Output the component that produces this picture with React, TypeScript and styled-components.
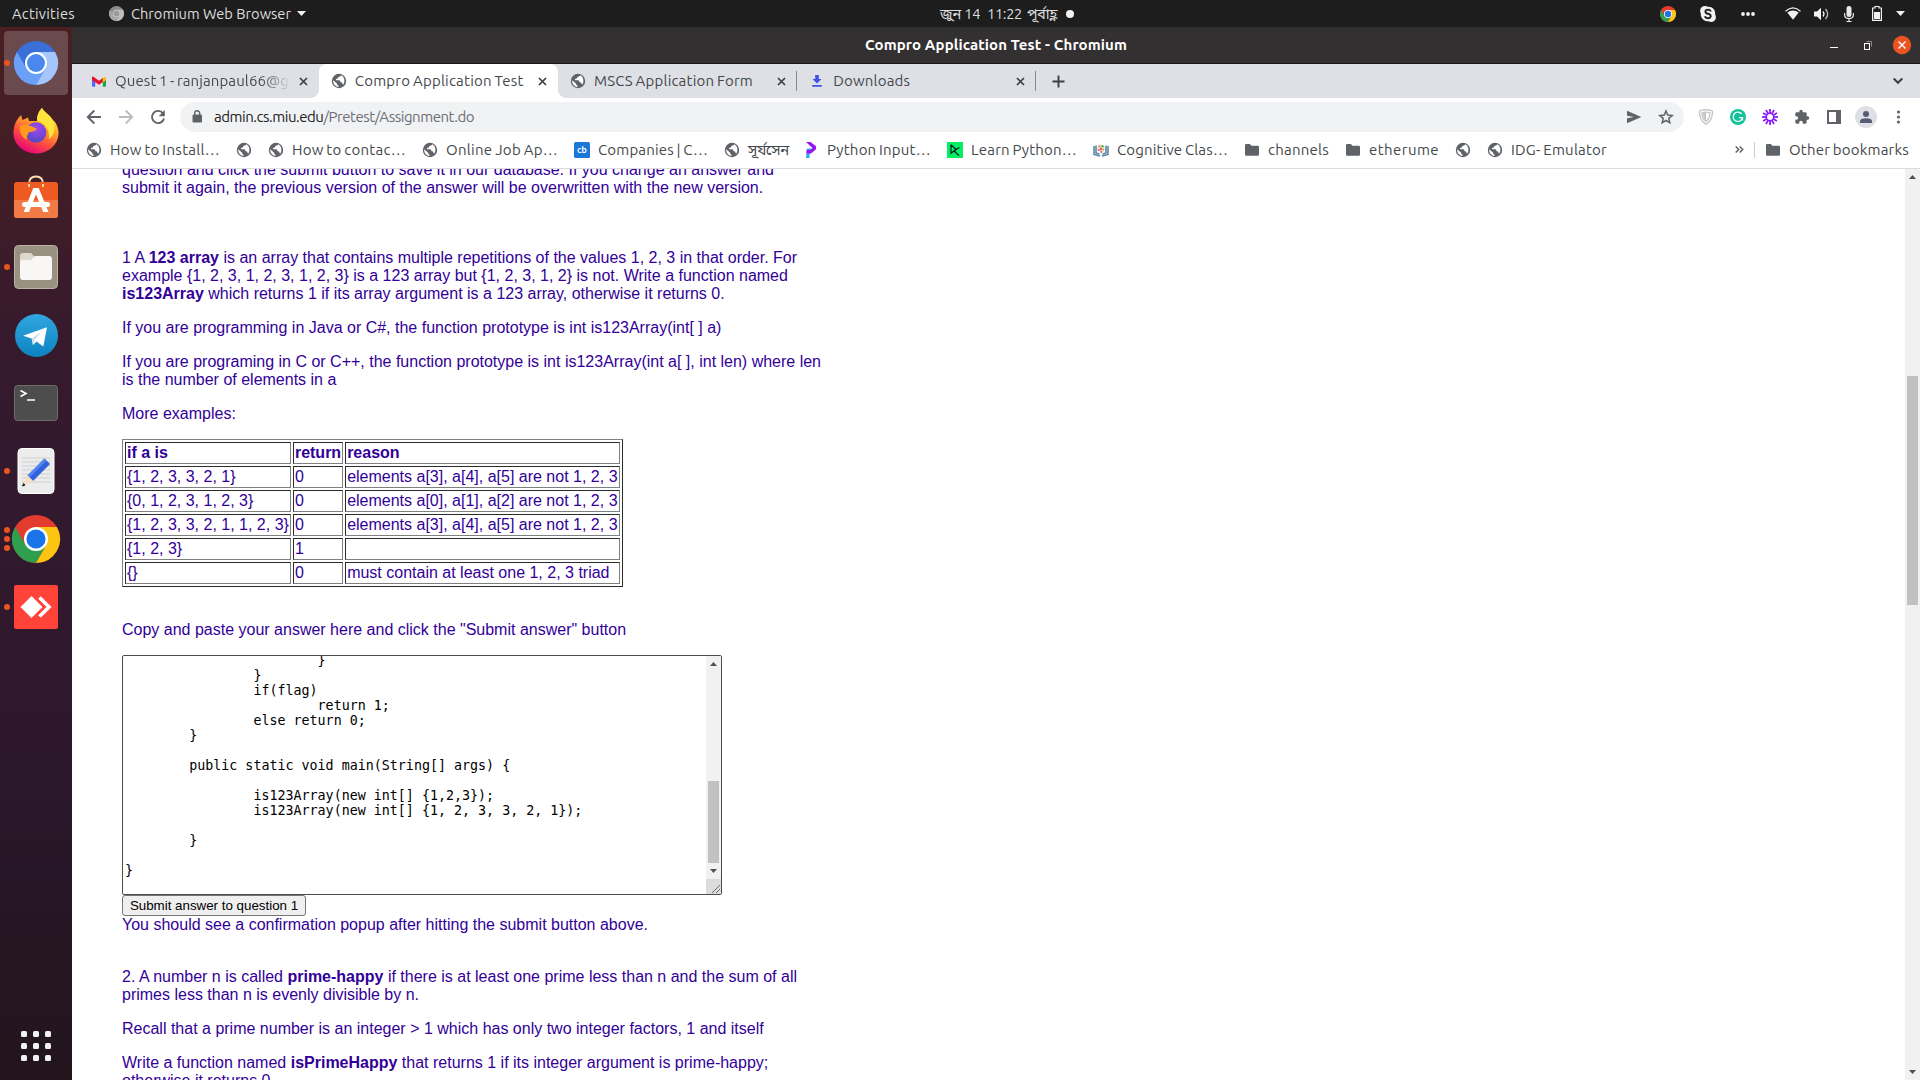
import React, { useLayoutEffect, useRef } from "react";
import styled, { createGlobalStyle } from "styled-components";

const Global = createGlobalStyle`
  html, body { margin: 0; padding: 0; overflow: hidden; background: #fff; }
  * { box-sizing: border-box; }
`;

const UI_FONT = `Ubuntu, "Open Sans", "Noto Sans", "Noto Sans Bengali", sans-serif`;
const ICON = "#5f6368";

/* ---------- shared pieces ---------- */

const Slot = styled.span<{ $w: number; $fade?: boolean }>`
  display: block;
  flex: none;
  width: ${(p) => p.$w}px;
  height: 18px;
  line-height: 18px;
  white-space: pre;
  ${(p) =>
    p.$fade &&
    "mask-image: linear-gradient(to right, #000 84%, transparent 101%); overflow: hidden;"}
`;

/* A label whose tracking is adjusted so that it fills its slot. */
function Label({ w, children, fade }: { w: number; children: React.ReactNode; fade?: boolean }) {
  const ref = useRef<HTMLSpanElement>(null);
  useLayoutEffect(() => {
    const el = ref.current;
    if (!el) return;
    el.style.letterSpacing = "0px";
    const n = (el.textContent || "").length;
    const natural = el.getBoundingClientRect().width;
    if (n > 0) el.style.letterSpacing = `${(w - natural) / n}px`;
  }, [w]);
  return (
    <Slot $w={w} $fade={fade}>
      <span ref={ref}>{children}</span>
    </Slot>
  );
}

const Svg = styled.svg`
  display: block;
  flex: none;
  overflow: visible;
`;

const Spacer = styled.div<{ $w?: number }>`
  flex: ${(p) => (p.$w === undefined ? "1 1 0" : "none")};
  width: ${(p) => p.$w ?? 0}px;
`;

/* ---------- desktop shell ---------- */

const Desktop = styled.div`
  display: flex;
  flex-direction: column;
  width: 1920px;
  height: 1080px;
  overflow: hidden;
  background: #fff;
  font-family: ${UI_FONT};
`;

const TopBar = styled.header`
  display: grid;
  grid-template-columns: 928px 1fr auto;
  align-items: center;
  height: 27px;
  flex: none;
  background: #1d1d1d;
  color: #dedede;
  font-size: 14.667px;
`;

const BarGroup = styled.div<{ $pad?: string }>`
  display: flex;
  align-items: center;
  padding: ${(p) => p.$pad ?? "0"};
`;

const Body = styled.div`
  display: flex;
  flex: 1;
  min-height: 0;
`;

const Dock = styled.nav`
  display: flex;
  flex-direction: column;
  align-items: center;
  gap: 4px;
  width: 72px;
  flex: none;
  padding: 4px 0 19px;
  background: linear-gradient(
    #491f21 0px,
    #401d27 170px,
    #371a2c 290px,
    #32192e 470px,
    #2d182b 720px,
    #271627 850px,
    #22151c 1053px
  );
`;

const DockItem = styled.div<{ $active?: boolean }>`
  display: grid;
  grid-template-columns: 6px 52px 6px;
  align-items: center;
  justify-items: center;
  width: 64px;
  height: 64px;
  flex: none;
  border-radius: 4px;
  background: ${(p) => (p.$active ? "#6a4a4c" : "transparent")};
`;

const Running = styled.div`
  display: flex;
  flex-direction: column;
  gap: 3px;
`;

const RunDot = styled.i`
  display: block;
  width: 6px;
  height: 6px;
  border-radius: 3px;
  background: #e95420;
`;

const AppGrid = styled.div`
  display: grid;
  grid-template-columns: repeat(3, 6px);
  grid-auto-rows: 6px;
  gap: 6px;
  margin-top: auto;
`;

const GridDot = styled.i`
  border-radius: 1.5px;
  background: #f1f1f1;
`;

/* ---------- browser chrome ---------- */

const Win = styled.main`
  display: flex;
  flex-direction: column;
  flex: 1;
  min-width: 0;
`;

const TitleBar = styled.div`
  display: grid;
  grid-template-columns: 1fr auto 1fr;
  align-items: center;
  height: 37px;
  flex: none;
  padding-right: 9px;
  padding-left: 9px;
  background: #333031;
  border-bottom: 1px solid #1a1919;
  color: #fff;
  font-size: 15px;
  font-weight: 700;
`;

const WinButtons = styled.div`
  display: flex;
  justify-content: flex-end;
  align-items: center;
  gap: 16px;
`;

const TabStrip = styled.div`
  display: flex;
  height: 34px;
  flex: none;
  padding-left: 7px;
  background: #dee0e5;
  color: #45484c;
  font-size: 15px;
  word-spacing: -1px;
`;

const Tab = styled.div<{ $active?: boolean; $line?: boolean; $w: number }>`
  position: relative;
  display: flex;
  align-items: center;
  width: ${(p) => p.$w}px;
  padding: 0 11px 0 12px;
  border-radius: 8px 8px 0 0;
  background: ${(p) => (p.$active ? "#fff" : "transparent")};
  &::before,
  &::after {
    content: "";
    position: absolute;
    bottom: 0;
    width: 8px;
    height: 8px;
    display: ${(p) => (p.$active ? "block" : "none")};
  }
  &::before {
    left: -8px;
    background: radial-gradient(circle at 0 0, transparent 7.5px, #fff 8px);
  }
  &::after {
    right: -8px;
    background: radial-gradient(circle at 100% 0, transparent 7.5px, #fff 8px);
  }
  ${(p) =>
    p.$line &&
    `&::after { display: block; right: 0; bottom: 7px; width: 1px; height: 20px; background: #85888d; }`}
`;

const TabIcon = styled.span`
  display: flex;
  justify-content: center;
  width: 16px;
  margin-right: 8px;
`;

const Toolbar = styled.div`
  display: flex;
  align-items: center;
  height: 38px;
  flex: none;
  padding: 0 12px 0 14px;
  font-size: 15px;
`;

const NavButtons = styled.div`
  display: flex;
  gap: 16px;
  margin-right: 14px;
`;

const Omnibox = styled.div`
  display: flex;
  align-items: center;
  width: 1504px;
  height: 30px;
  padding: 0 10px 0 9px;
  border-radius: 15px;
  background: #f1f2f4;
  color: #202124;
`;

const Path = styled.span`
  color: #6b6f74;
`;

const Extensions = styled.div`
  display: flex;
  align-items: center;
  gap: 16px;
  padding-left: 14px;
`;

const Avatar = styled.span`
  display: flex;
  align-items: center;
  justify-content: center;
  width: 22px;
  height: 22px;
  margin: 0 -3px;
  border-radius: 50%;
  background: #dee0e5;
`;

const Bookmarks = styled.div`
  display: flex;
  align-items: center;
  gap: 16px;
  height: 33px;
  flex: none;
  padding: 0 11px 5px 14px;
  border-bottom: 1px solid #dadce0;
  color: #45484c;
  font-size: 15px;
  word-spacing: -1px;
`;

const Bookmark = styled.div`
  display: flex;
  align-items: center;
  gap: 8px;
`;

const Overflow = styled.div`
  display: flex;
  align-items: center;
  gap: 10px;
  margin-right: -6px;
`;

const Divider = styled.i`
  width: 1px;
  height: 16px;
  background: #c9ccd1;
`;

/* ---------- page ---------- */

const Viewport = styled.div`
  display: flex;
  flex: 1;
  min-height: 0;
  overflow: hidden;
`;

const Page = styled.article`
  flex: 1;
  min-width: 0;
  height: 911px;
  overflow: hidden;
  padding-left: 50px;
  color: #330099;
  font-family: "Liberation Sans", Arial, sans-serif;
  font-size: 16px;
  line-height: 18px;
  white-space: nowrap;
`;

const Para = styled.p<{ $top?: number }>`
  margin: ${(p) => p.$top ?? 16}px 0 0;
`;

const Examples = styled.table`
  margin-top: 16px;
  border: 1px solid;
  border-color: #808080 #2b2b2b #2b2b2b #808080;
  border-collapse: separate;
  border-spacing: 2px;
`;

const Cell = styled.td<{ $head?: boolean }>`
  height: 22px;
  padding: 1px;
  border: 1px solid;
  border-color: #2b2b2b #808080 #808080 #2b2b2b;
  font-weight: ${(p) => (p.$head ? 700 : 400)};
`;

const Editor = styled.div`
  display: flex;
  width: 600px;
  height: 240px;
  margin-top: 16px;
  border: 1px solid #4c4c4c;
  border-radius: 2px;
  overflow: hidden;
  background: #fff;
`;

const Code = styled.pre`
  flex: 1;
  margin: -3px 0 0;
  padding: 0 2px;
  color: #000;
  font: 13.333px/15px "DejaVu Sans Mono", monospace;
  tab-size: 8;
`;

const ScrollColumn = styled.div`
  display: flex;
  flex-direction: column;
  width: 15px;
  flex: none;
`;

const Track = styled.div`
  display: flex;
  flex-direction: column;
  align-items: center;
  width: 15px;
  flex: 1;
  min-height: 0;
  background: #f1f1f1;
`;

const Thumb = styled.div<{ $top: number; $h: number }>`
  width: 11px;
  height: ${(p) => p.$h}px;
  margin-top: ${(p) => p.$top}px;
  flex: none;
  background: #c1c1c1;
`;

const Arrow = styled.i<{ $down?: boolean }>`
  width: 7px;
  height: 4px;
  margin: ${(p) => (p.$down ? "auto 0 6px" : "6px 0 0")};
  flex: none;
  background: #505050;
  clip-path: ${(p) =>
    p.$down ? "polygon(0 0, 100% 0, 50% 100%)" : "polygon(50% 0, 100% 100%, 0 100%)"};
`;

const Grip = styled.div`
  display: flex;
  align-items: flex-end;
  justify-content: flex-end;
  height: 15px;
  padding: 1px;
  background: #dcdcdc;
`;

const Submit = styled.button`
  display: block;
  width: 184px;
  height: 21px;
  padding: 0;
  border: 1px solid #767676;
  border-radius: 3px;
  background: #efefef;
  color: #000;
  font: 13.333px/17px "Liberation Sans", Arial, sans-serif;
`;

/* ---------- icons ---------- */

const Globe = () => (
  <Svg width="16" height="16" viewBox="0 0 16 16">
    <circle cx="8" cy="8" r="7.2" fill={ICON} />
    <path
      d="M9.600 2.200 8.900 3.400 6.800 3.500 6.600 5 4.600 5.300 4.900 6.900 7.900 7 9.200 8.200 8.600 9.900 6.600 10.300 6.900 12.800 6.200 13.600 3.400 12.300 2 9.400 2.200 7.400 4 8.200 5.400 9.200 6 8.700 3.900 6.800 2.600 6.400 4.200 3.400 7 2z"
      fill="none"
    />
    <path
      d="M10.300 2.300C9.800 3.700 8.600 3.700 7.400 3.900 6.900 4.500 7.300 5.100 6.700 5.600L5 5.900 5.100 7.200H8.200C9.200 7.400 9.300 8.500 9.600 9.200L11.200 9.400C11.300 10.300 11.500 11 12.300 11.600 14.400 8.800 13.600 4.200 10.300 2.300zM2.200 7.300C1.800 10.500 4.200 13.700 7.500 13.900V12.500C6.400 12.400 6.100 11.600 6.200 10.700z"
      fill="#fff"
    />
  </Svg>
);

const Gmail = () => (
  <Svg width="14" height="11" viewBox="0 0 14 11">
    <path d="M0 2v7.8q0 .9.9.9h2.3V4.5z" fill="#4b6bfb" />
    <path d="M14 2v7.8q0 .9-.9.9h-2.3V4.5z" fill="#18a84b" />
    <path d="M14 1.8v2.3l-3.2 2.3V2.2l1-.8Q14-.2 14 1.8z" fill="#fbbc04" />
    <path d="M0 4V1.8Q0-.2 2.2 1.2L7 4.8l3.8-2.9v4L7 8.8z" fill="#e8112d" />
  </Svg>
);

const Close = () => (
  <Svg width="9" height="9" viewBox="0 0 9 9" stroke="#3c4043" strokeWidth="1.7">
    <path d="M1 1l7 7M8 1L1 8" />
  </Svg>
);

const Folder = () => (
  <Svg width="16" height="16" viewBox="0 0 16 16">
    <path d="M1 3.3Q1 2 2.3 2h3.5l1.6 1.7h6.3Q15 3.7 15 5v7.4q0 1.3-1.3 1.3H2.3Q1 13.700 1 12.400z" fill={ICON} />
  </Svg>
);

const ChromeLogo = ({ size, mono }: { size: number; mono?: "blue" | "gray" }) => {
  const [a, b, c, d] =
    mono === "blue"
      ? ["#3a6fd8", "#6ba0f8", "#a6c5fb", "#4a88f0"]
      : mono === "gray"
        ? ["#8b8b8b", "#a6a6a6", "#bdbdbd", "#9a9a9a"]
        : ["#e33b2e", "#2f9e4f", "#fcc511", "#1a73e8"];
  return (
    <Svg width={size} height={size} viewBox="0 0 48 48">
      <circle cx="24" cy="24" r="24" fill={a} />
      <path d="M3.200 12A24 24 0 0 0 24 48L34.4 30 24 24 13.6 30z" fill={b} />
      <path d="M44.800 12A24 24 0 0 1 24 48L34.400 30 24 24V12z" fill={c} />
      <circle cx="24" cy="24" r="12" fill={mono === "gray" ? "#d0d0d0" : "#fff"} />
      <circle cx="24" cy="24" r={mono ? 9.8 : 9.6} fill={d} />
    </Svg>
  );
};

const Firefox = () => (
  <Svg width="46" height="46" viewBox="0 0 46 46">
    <defs>
      <linearGradient id="fxBody" x1=".8" y1=".05" x2=".3" y2="1">
        <stop offset="0" stopColor="#fff14a" />
        <stop offset=".35" stopColor="#ffa62a" />
        <stop offset=".65" stopColor="#ff4f3e" />
        <stop offset="1" stopColor="#e4007f" />
      </linearGradient>
      <radialGradient id="fxOrb" cx=".55" cy=".3" r=".7">
        <stop offset="0" stopColor="#a346f0" />
        <stop offset="1" stopColor="#5349c4" />
      </radialGradient>
    </defs>
    <path
      d="M29 0C31 4 36 6 39 11L42 14C44 17 46 22 45.500 26A22.500 20 0 0 1 .500 25C.500 18 3 12 8 7L9.500 12 15 9.500 16 13 24 13C24 7 26 3 29 0z"
      fill="url(#fxBody)"
    />
    <path d="M29 0C31 4 36 6 39 11 43 18 42 27 36 31 37 20 31 15 24 12.500 24 7 26 3 29 0z" fill="#ffe43d" />
    <circle cx="23" cy="24.500" r="10.300" fill="url(#fxOrb)" />
    <path d="M7 18C12 16 18 17 24 21 21 24 18 23.500 15.500 24.500 15 27 13 29 14 32 8 29 6 23 7 18z" fill="#ff9a1f" />
  </Svg>
);

const Software = () => (
  <Svg width="46" height="48" viewBox="0 0 46 48">
    <path d="M16 9Q16 1.500 23 1.500T30 9" fill="none" stroke="#fbdcae" strokeWidth="1.800" />
    <rect x="1" y="7" width="44" height="36" rx="3" fill="#ee5b22" />
    <path d="M1 25H45V40q0 3-3 3H4q-3 0-3-3z" fill="#f27a45" />
    <path d="M20.300 13h5.400L35.500 37h-5.300L23 19.500 16 37h-5.300z" fill="#fff" />
    <rect x="9" y="27" width="28" height="5" rx="2.500" fill="#fff" />
    <path d="M16 9v3M30 9v3" stroke="#fbdcae" strokeWidth="1.800" />
  </Svg>
);

const Files = () => (
  <Svg width="46" height="46" viewBox="0 0 46 46">
    <rect x="1.500" y="1.500" width="43" height="43" rx="4" fill="#999181" stroke="#b9b3a6" />
    <path d="M7 12q0-3 3-3h8l4 4h14v8H7z" fill="#dcd8cc" />
    <path d="M7 18q0-2 2-2h9l4-4h14q3 0 3 3v18q0 3-3 3H10q-3 0-3-3z" fill="#f8f7f5" />
  </Svg>
);

const Telegram = () => (
  <Svg width="43" height="43" viewBox="0 0 43 43">
    <defs>
      <linearGradient id="tg" x1="0" y1="0" x2="0" y2="1">
        <stop offset="0" stopColor="#31a7df" />
        <stop offset="1" stopColor="#0d82c2" />
      </linearGradient>
    </defs>
    <circle cx="21.500" cy="21.500" r="21.500" fill="url(#tg)" />
    <path d="M8 21.800 32 13.200 28.300 32.500 21.500 27.500 18 31 16.700 24.600z" fill="#fff" />
    <path d="M16.700 24.600 27 17.500 19.500 26 18 31z" fill="#c9dfec" />
  </Svg>
);

const Terminal = () => (
  <Svg width="44" height="36" viewBox="0 0 44 36">
    <rect x=".500" y=".500" width="43" height="35" rx="3" fill="#4d4d4d" stroke="#6d6d6d" />
    <path d="M6.500 5.500 12 8.500 6.500 11.500M13 15h8" stroke="#fff" strokeWidth="1.600" fill="none" />
  </Svg>
);

const TextEditor = () => (
  <Svg width="38" height="46" viewBox="0 0 38 46">
    <rect x="1" y=".500" width="36" height="45" rx="4" fill="#ececec" stroke="#fff" />
    <path
      d="M5 10h28M5 14h28M5 18h28M5 22h28M5 26h28M5 30h28M5 34h28"
      stroke="#cfcfcf"
      strokeWidth="1"
    />
    <path d="M27.500 10.500 33 16 16 33 10.500 27.500z" fill="#2f62dc" />
    <path d="M27.500 10.500 29.500 12.500 12.500 29.500 10.500 27.500z" fill="#5485f0" />
    <path d="M10.500 27.500 16 33 5.500 38z" fill="#f8dcc4" />
    <path d="M6.600 35.500 5.500 38 8 37z" fill="#222" stroke="#222" />
  </Svg>
);

const AnyDesk = () => (
  <Svg width="44" height="44" viewBox="0 0 44 44">
    <rect width="44" height="44" rx="2" fill="#ff4338" />
    <path d="M17.500 11 28.500 22 17.500 33 6.500 22z" fill="#fff" />
    <path d="M25.500 12.500 35 22 25.500 31.500" fill="none" stroke="#fff" strokeWidth="3.600" />
  </Svg>
);

const Caret = ({ w = 9 }: { w?: number }) => (
  <Svg width={w} height="5" viewBox="0 0 9 5">
    <path d="M0 0h9L4.500 5z" fill="#f2f2f2" />
  </Svg>
);

const StatusIcons = () => (
  <>
    <ChromeLogo size={16} />
    <Spacer $w={24} />
    <Svg width="16" height="16" viewBox="0 0 16 16">
      <path d="M4.500 0Q7 0 8 .700C13 .700 15.500 4 15.200 8.500 17 12 15 16 11.500 16Q9.500 16 8.500 15.300C3.500 15.300.500 12 .800 7.500-.800 4 1 0 4.500 0z" fill="#f2f2f2" />
      <path
        d="M10.800 5.500Q10.300 3.600 8 3.600 5.400 3.700 5.400 5.600 5.500 7.300 8 7.800 10.700 8.300 10.700 10.200 10.500 12.300 8 12.300 5.500 12.300 5 10.300"
        fill="none"
        stroke="#222"
        strokeWidth="1.900"
      />
    </Svg>
    <Spacer $w={24} />
    <Svg width="16" height="4" viewBox="0 0 16 4" fill="#f2f2f2">
      <circle cx="3" cy="2" r="1.900" />
      <circle cx="8" cy="2" r="1.900" />
      <circle cx="13" cy="2" r="1.900" />
    </Svg>
    <Spacer $w={29} />
    <Svg width="16" height="14" viewBox="0 0 16 14">
      <path d="M.500 4.200Q8-2.500 15.500 4.200" fill="none" stroke="#f2f2f2" strokeWidth="1.200" />
      <path d="M2.300 5.600Q8 1.300 13.700 5.600L8 12.800z" fill="#f2f2f2" />
    </Svg>
    <Spacer $w={13} />
    <Svg width="15" height="14" viewBox="0 0 15 14">
      <path d="M0 4.500h3L7 .800v12.400L3 9.500H0z" fill="#f2f2f2" />
      <path d="M9 4.500Q11 7 9 9.500" fill="none" stroke="#f2f2f2" strokeWidth="1.300" />
      <path d="M11.500 2Q15.800 7 11.500 12" fill="none" stroke="#bbb" strokeWidth="1.300" />
    </Svg>
    <Spacer $w={15} />
    <Svg width="10" height="16" viewBox="0 0 10 16">
      <rect x="2.500" y="0" width="5" height="11" rx="2.500" fill="#e8e8e8" />
      <path d="M.600 7v1.500Q.600 12.600 5 12.600T9.400 8.500V7M5 12.600V15.500M2.500 15.500h5" fill="none" stroke="#f2f2f2" strokeWidth="1.100" />
    </Svg>
    <Spacer $w={18} />
    <Svg width="10" height="15" viewBox="0 0 10 15">
      <path d="M3 .500h4V2h2.400v12.400H.600V2H3z" fill="none" stroke="#f2f2f2" strokeWidth="1.200" />
      <rect x="2" y="6" width="6" height="7" fill="#f2f2f2" />
    </Svg>
    <Spacer $w={14} />
    <Caret />
  </>
);

/* ---------- content ---------- */

const dock: { icon: React.ReactNode; run: number; active?: boolean }[] = [
  { icon: <ChromeLogo size={44} mono="blue" />, run: 1, active: true },
  { icon: <Firefox />, run: 0 },
  { icon: <Software />, run: 0 },
  { icon: <Files />, run: 1 },
  { icon: <Telegram />, run: 0 },
  { icon: <Terminal />, run: 0 },
  { icon: <TextEditor />, run: 1 },
  { icon: <ChromeLogo size={48} />, run: 3 },
  { icon: <AnyDesk />, run: 1 },
];

const DownloadIcon = () => (
  <Svg width="10" height="12" viewBox="0 0 10 12" fill="#3f51e8">
    <path d="M3.200 0h3.600v4H9.500L5 8.500.500 4h2.700zM.200 10h9.600v1.800H.200z" />
  </Svg>
);

const CareerIcon = () => (
  <Svg width="16" height="16" viewBox="0 0 16 16">
    <rect width="16" height="16" rx="1.500" fill="#1b78d8" />
    <text x="8" y="11" textAnchor="middle" fontFamily="Lato, sans-serif" fontWeight="700" fontSize="9" fill="#fff">
      cb
    </text>
  </Svg>
);

const PIcon = () => (
  <Svg width="16" height="16" viewBox="0 0 16 16">
    <path d="M4 6.500h4.500V10l-2 1.500V16H3z" fill="#2ba8f5" />
    <path d="M3 0h4.500L13 4.300v3L8 11.500H3.500L3.500 8h4L9.500 6z" fill="#9a12f5" />
  </Svg>
);

const DCIcon = () => (
  <Svg width="16" height="16" viewBox="0 0 16 16">
    <rect width="16" height="16" fill="#03ef62" />
    <path d="M4 2.800v8.500L9 7.500 4 2.800M12.500 5.500 9 7.500 7.500 9.500 12 13.500" fill="none" stroke="#05192d" strokeWidth="1.200" />
  </Svg>
);

const CognitiveIcon = () => (
  <Svg width="16" height="16" viewBox="0 0 16 16">
    <path d="M1 4v8.500l6 1.500M15 4v8.500L9 14M3 3.500v7.500l3.500 1M13 3.500v7.500l-3.500 1" fill="none" stroke="#5a86a8" strokeWidth="1.600" />
    <circle cx="8" cy="6.500" r="3.800" fill="#f3ead9" />
    <circle cx="6.500" cy="4.500" r="1.200" fill="#f0a03a" />
    <circle cx="9.500" cy="4.300" r="1.200" fill="#4cae6b" />
    <circle cx="8" cy="7" r="1.200" fill="#e8526a" />
    <circle cx="10.300" cy="7.600" r="1.100" fill="#f0a03a" />
    <circle cx="5.700" cy="8" r="1.100" fill="#d35ab0" />
    <circle cx="8.300" cy="10" r="1" fill="#e8526a" />
  </Svg>
);

const bookmarks: { icon: React.ReactNode; text?: string; w?: number }[] = [
  { icon: <Globe />, text: "How to Install…", w: 110 },
  { icon: <Globe /> },
  { icon: <Globe />, text: "How to contac…", w: 114 },
  { icon: <Globe />, text: "Online Job Ap…", w: 112 },
  { icon: <CareerIcon />, text: "Companies | C…", w: 110 },
  { icon: <Globe />, text: "সূর্যসেন", w: 39 },
  { icon: <PIcon />, text: "Python Input…", w: 104 },
  { icon: <DCIcon />, text: "Learn Python…", w: 106 },
  { icon: <CognitiveIcon />, text: "Cognitive Clas…", w: 111 },
  { icon: <Folder />, text: "channels", w: 61 },
  { icon: <Folder />, text: "etherume", w: 70 },
  { icon: <Globe /> },
  { icon: <Globe />, text: "IDG- Emulator", w: 96 },
];

const rows = [
  ["if a is", "return", "reason"],
  ["{1, 2, 3, 3, 2, 1}", "0", "elements a[3], a[4], a[5] are not 1, 2, 3"],
  ["{0, 1, 2, 3, 1, 2, 3}", "0", "elements a[0], a[1], a[2] are not 1, 2, 3"],
  ["{1, 2, 3, 3, 2, 1, 1, 2, 3}", "0", "elements a[3], a[4], a[5] are not 1, 2, 3"],
  ["{1, 2, 3}", "1", ""],
  ["{}", "0", "must contain at least one 1, 2, 3 triad"],
];

const code = [
  "\t\t\t}",
  "\t\t}",
  "\t\tif(flag)",
  "\t\t\treturn 1;",
  "\t\telse return 0;",
  "\t}",
  "",
  "\tpublic static void main(String[] args) {",
  "",
  "\t\tis123Array(new int[] {1,2,3});",
  "\t\tis123Array(new int[] {1, 2, 3, 3, 2, 1});",
  "",
  "\t}",
  "",
  "}",
  "",
].join("\n");

const tabs = [
  { icon: <Gmail />, text: "Quest 1 - ranjanpaul66@g", w: 174, slot: 240, fade: true },
  { icon: <Globe />, text: "Compro Application Test", w: 169, slot: 239.5, active: true },
  { icon: <Globe />, text: "MSCS Application Form", w: 159, slot: 239.5, line: true },
  { icon: <DownloadIcon />, text: "Downloads", w: 77, slot: 239, line: true },
];

export default function App() {
  return (
    <Desktop>
      <Global />
      <TopBar>
        <BarGroup $pad="0 0 0 12px">
          <Label w={63}>Activities</Label>
          <Spacer $w={34} />
          <ChromeLogo size={15} mono="gray" />
          <Spacer $w={7} />
          <Label w={160}>Chromium Web Browser</Label>
          <Spacer $w={6} />
          <Caret />
        </BarGroup>
        <BarGroup $pad="0 0 0 12px">
          <Label w={40}>জুন 14</Label>
          <Spacer $w={7} />
          <Label w={35}>11:22</Label>
          <Spacer $w={5} />
          <Label w={27}>পূর্বাহ্ণ</Label>
          <Spacer $w={12} />
          <Svg width="8" height="8">
            <circle cx="4" cy="4" r="4" fill="#f2f2f2" />
          </Svg>
        </BarGroup>
        <BarGroup $pad="0 15px 0 0">
          <StatusIcons />
        </BarGroup>
      </TopBar>
      <Body>
        <Dock>
          {dock.map((d, i) => (
            <DockItem key={i} $active={d.active}>
              <Running>
                {Array.from({ length: d.run }, (_, k) => (
                  <RunDot key={k} />
                ))}
              </Running>
              {d.icon}
            </DockItem>
          ))}
          <AppGrid>
            {Array.from({ length: 9 }, (_, k) => (
              <GridDot key={k} />
            ))}
          </AppGrid>
        </Dock>
        <Win>
          <TitleBar>
            <span />
            <Label w={262}>Compro Application Test - Chromium</Label>
            <WinButtons>
              <Svg width="18" height="18" viewBox="0 0 18 18">
                <path d="M5 11.500h8" stroke="#fff" />
              </Svg>
              <Svg width="18" height="18" viewBox="0 0 18 18" fill="none">
                <path d="M7.500 5.500h5v5" stroke="#8a8889" />
                <rect x="5.500" y="7.500" width="5" height="6" stroke="#fff" />
              </Svg>
              <Svg width="18" height="18" viewBox="0 0 18 18">
                <circle cx="9" cy="9" r="9.200" fill="#e95420" />
                <path d="M5.500 5.500l7 7M12.500 5.500l-7 7" stroke="#fff" strokeWidth="1.400" />
              </Svg>
            </WinButtons>
          </TitleBar>
          <TabStrip>
            {tabs.map((t) => (
              <Tab key={t.text} $w={t.slot} $active={t.active} $line={t.line}>
                <TabIcon>{t.icon}</TabIcon>
                <Label w={t.w} fade={t.fade}>
                  {t.text}
                </Label>
                <Spacer />
                <Close />
              </Tab>
            ))}
            <BarGroup $pad="0 17px 0 16px">
              <Svg width="13" height="13" viewBox="0 0 13 13" stroke="#3c4043" strokeWidth="1.900">
                <path d="M6.500 .500v12M.500 6.500h12" />
              </Svg>
              <Spacer $w={828} />
              <Svg width="10" height="6" viewBox="0 0 10 6" fill="none" stroke="#3c4043" strokeWidth="2">
                <path d="M.700.500 5 4.800 9.300.500" />
              </Svg>
            </BarGroup>
          </TabStrip>
          <Toolbar>
            <NavButtons>
              <Svg width="16" height="16" viewBox="0 0 16 16" fill="none" stroke={ICON} strokeWidth="1.900">
                <path d="M15 8H2.300M8.300 1.500 1.800 8 8.300 14.500" />
              </Svg>
              <Svg width="16" height="16" viewBox="0 0 16 16" fill="none" stroke="#babcbe" strokeWidth="1.900">
                <path d="M1 8h12.700M7.700 1.500 14.200 8 7.700 14.500" />
              </Svg>
              <Svg width="16" height="16" viewBox="0 0 16 16">
                <path d="M13 4.400A6.100 6.100 0 1 0 14 9.500" fill="none" stroke={ICON} strokeWidth="1.900" />
                <path d="M14.800 1v6.200H8.600z" fill={ICON} />
              </Svg>
            </NavButtons>
            <Omnibox>
              <Svg width="16" height="16" viewBox="0 0 16 16">
                <rect x="3.500" y="5.500" width="9.500" height="8" rx="1.200" fill={ICON} />
                <path d="M5.700 6V4.200a2.500 2.500 0 0 1 5 0V6" fill="none" stroke={ICON} strokeWidth="1.400" />
              </Svg>
              <Spacer $w={9} />
              <Label w={260}>
                admin.cs.miu.edu<Path>/Pretest/Assignment.do</Path>
              </Label>
              <Spacer />
              <Svg width="16" height="16" viewBox="0 0 16 16" fill={ICON}>
                <path d="M1 1.800 15.300 8 1 14.200V9.300L8 8 1 6.700z" />
              </Svg>
              <Spacer $w={16} />
              <Svg width="16" height="16" viewBox="0 0 16 16" fill="none" stroke={ICON} strokeWidth="1.500">
                <path d="M8 2 9.700 6.100 14.200 6.500 10.800 9.400 11.800 13.800 8 11.500 4.200 13.800 5.200 9.400 1.800 6.500 6.300 6.100z" />
              </Svg>
            </Omnibox>
            <Extensions>
              <Svg width="16" height="16" viewBox="0 0 16 16" fill="none" stroke="#c6c6c6" strokeWidth="1.300">
                <path d="M1.500 2Q8-.500 14.500 2 15 11 8 15.400 1 11 1.500 2z" />
                <path d="M4 3.800Q8 2.300 12 3.800 12.200 9.500 8 12.500 3.800 9.500 4 3.800z" />
                <path d="M8 3.500v8.500Q5 9.500 5 4.300z" fill="#c6c6c6" stroke="none" />
              </Svg>
              <Svg width="16" height="16" viewBox="0 0 16 16" fill="none" stroke="#fff" strokeWidth="1.200">
                <circle cx="8" cy="8" r="8" fill="#15c39a" stroke="none" />
                <path d="M11.700 5A4.700 4.700 0 1 0 12.500 8.700H9M12.500 8.700V11.500" />
              </Svg>
              <Svg width="16" height="16" viewBox="0 0 16 16" stroke="#8a1cf5">
                <circle cx="8" cy="8" r="3.700" fill="none" strokeWidth="1.500" />
                {Array.from({ length: 12 }, (_, i) => (
                  <path key={i} d="M8 0v4.400" transform={`rotate(${i * 30} 8 8)`} strokeWidth="1.800" />
                ))}
              </Svg>
              <Svg width="16" height="16" viewBox="0 0 24 24" fill={ICON}>
                <path d="M20.500 11H19V7c0-1.100-.900-2-2-2h-4V3.500a2.500 2.500 0 0 0-5 0V5H4c-1.100 0-2 .900-2 2v3.800h1.500a2.700 2.700 0 0 1 0 5.400H2V20c0 1.100.900 2 2 2h3.800v-1.500a2.700 2.700 0 0 1 5.400 0V22H17c1.100 0 2-.900 2-2v-4h1.500a2.500 2.500 0 0 0 0-5z" />
              </Svg>
              <Svg width="16" height="16" viewBox="0 0 16 16">
                <path d="M1 1h14v14H1zM3 3v10h7V3z" fill={ICON} fillRule="evenodd" />
              </Svg>
              <Avatar>
                <Svg width="14" height="14" viewBox="0 0 14 14" fill="#545c74">
                  <circle cx="7" cy="4" r="3" />
                  <path d="M1 13v-1.500Q1 8.300 7 8.300t6 3.200V13z" />
                </Svg>
              </Avatar>
              <Svg width="16" height="16" viewBox="0 0 16 16" fill={ICON}>
                <circle cx="8.500" cy="3" r="1.600" />
                <circle cx="8.500" cy="8" r="1.600" />
                <circle cx="8.500" cy="13" r="1.600" />
              </Svg>
            </Extensions>
          </Toolbar>
          <Bookmarks>
            {bookmarks.map((b, i) => (
              <Bookmark key={i}>
                {b.icon}
                {b.text && <Label w={b.w ?? 0}>{b.text}</Label>}
              </Bookmark>
            ))}
            <Spacer />
            <Overflow>
              <Svg width="9" height="7" viewBox="0 0 9 7" fill="none" stroke={ICON} strokeWidth="1.500">
                <path d="M.700.500 3.700 3.500.700 6.500M4.700.500 7.700 3.500 4.700 6.500" />
              </Svg>
              <Divider />
            </Overflow>
            <Bookmark>
              <Folder />
              <Label w={120}>Other bookmarks</Label>
            </Bookmark>
          </Bookmarks>
          <Viewport>
            <Page>
              <Para $top={-8}>
                question and click the submit button to save it in our database. If you change an answer and
                <br />
                submit it again, the previous version of the answer will be overwritten with the new version.
              </Para>
              <Para $top={52}>
                1 A <b>123 array</b> is an array that contains multiple repetitions of the values 1, 2, 3 in that order. For
                <br />
                example {"{1, 2, 3, 1, 2, 3, 1, 2, 3}"} is a 123 array but {"{1, 2, 3, 1, 2}"} is not. Write a function named
                <br />
                <b>is123Array</b> which returns 1 if its array argument is a 123 array, otherwise it returns 0.
              </Para>
              <Para>If you are programming in Java or C#, the function prototype is int is123Array(int[ ] a)</Para>
              <Para>
                If you are programing in C or C++, the function prototype is int is123Array(int a[ ], int len) where len
                <br />
                is the number of elements in a
              </Para>
              <Para>More examples:</Para>
              <Examples>
                <tbody>
                  {rows.map((r, i) => (
                    <tr key={i}>
                      {r.map((c, k) => (
                        <Cell key={k} $head={i === 0}>
                          {c}
                        </Cell>
                      ))}
                    </tr>
                  ))}
                </tbody>
              </Examples>
              <Para $top={34}>Copy and paste your answer here and click the "Submit answer" button</Para>
              <Editor>
                <Code>{code}</Code>
                <ScrollColumn>
                  <Track>
                    <Arrow />
                    <Thumb $top={115} $h={82} />
                    <Arrow $down />
                  </Track>
                  <Grip>
                    <Svg width="8" height="8" viewBox="0 0 8 8" stroke="#6a6a6a">
                      <path d="M0 8 8 0M4 8 8 4" />
                    </Svg>
                  </Grip>
                </ScrollColumn>
              </Editor>
              <Submit>Submit answer to question 1</Submit>
              <Para $top={0}>You should see a confirmation popup after hitting the submit button above.</Para>
              <Para $top={34}>
                2. A number n is called <b>prime-happy</b> if there is at least one prime less than n and the sum of all
                <br />
                primes less than n is evenly divisible by n.
              </Para>
              <Para>Recall that a prime number is an integer &gt; 1 which has only two integer factors, 1 and itself</Para>
              <Para>
                Write a function named <b>isPrimeHappy</b> that returns 1 if its integer argument is prime-happy;
                <br />
                otherwise it returns 0.
              </Para>
            </Page>
            <ScrollColumn>
              <Track>
                <Arrow />
                <Thumb $top={197} $h={229} />
                <Arrow $down />
              </Track>
            </ScrollColumn>
          </Viewport>
        </Win>
      </Body>
    </Desktop>
  );
}
